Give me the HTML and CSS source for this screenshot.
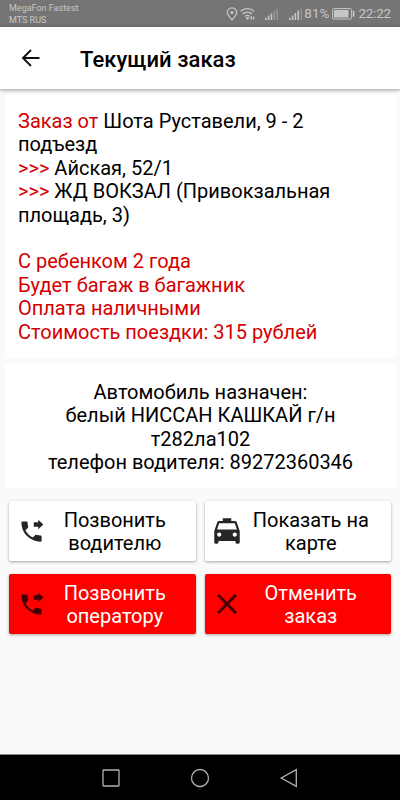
FILE: index.html
```html
<!DOCTYPE html>
<html lang="ru">
  <head>
    <meta charset="UTF-8" />
    <meta name="viewport" content="width=device-width, initial-scale=1.0" />
    <title>Текущий заказ</title>
    <link rel="stylesheet" href="styles.css">
  </head>
  <body>
    <div class="status-bar">
      <div class="carrier">
        <div>MegaFon Fastest</div>
        <div>MTS RUS</div>
      </div>
      <div class="status-icons">
        <svg class="pin" width="12" height="14" viewBox="0 0 12 14">
          <path d="M6 13C3.500 10 1.300 8 1.300 5.600a4.700 4.700 0 0 1 9.400 0C10.700 8 8.500 10 6 13z" fill="none" stroke="#c6c6c6" stroke-width="1.200"/>
          <circle cx="6" cy="5.600" r="1.500" fill="#c6c6c6"/>
        </svg>
        <svg class="wifi" width="15" height="13" viewBox="0 0 15 13">
          <path d="M.6 4.300a10 10 0 0 1 13.600 0M2.800 7a6.500 6.500 0 0 1 9.200 0M5 9.500a3.500 3.500 0 0 1 4.800 0" fill="none" stroke="#c6c6c6" stroke-width="1.400"/>
          <circle cx="7.400" cy="11.300" r="1.300" fill="#c6c6c6"/>
          <path d="M10.500 9.500h1.500v3h-1.500zM12.800 9.500h1.500v3h-1.500z" fill="#c6c6c6"/>
        </svg>
        <svg class="signal" width="14" height="12" viewBox="0 0 14 12">
          <path d="M0 9.500h1.600V12H0zM2.800 7.500h1.600V12H2.800zM5.600 5.500h1.600V12H5.600z" fill="#c6c6c6"/>
          <path d="M8.400 3h1.600v9H8.400zM11.400 1h1.400v11h-1.400z" fill="#999"/>
        </svg>
        <svg class="signal" width="14" height="12" viewBox="0 0 14 12">
          <path d="M0 9.500h1.600V12H0zM2.800 7.500h1.600V12H2.800zM5.600 5h1.600v7H5.600zM8.400 2.500h1.600V12H8.400z" fill="#c6c6c6"/>
          <path d="M11.600 .5h1.200V12h-1.200z" fill="#999"/>
        </svg>
        <span class="percent">81%</span>
        <svg class="battery" width="23" height="12" viewBox="0 0 23 12">
          <rect x=".6" y=".6" width="19" height="10.400" rx="1" fill="none" stroke="#c6c6c6" stroke-width="1"/>
          <path d="M2 2h14.500v7.600H2zM20.800 2.800h1.600v6h-1.600z" fill="#c6c6c6"/>
        </svg>
        <span class="clock">22:22</span>
      </div>
    </div>

    <header class="toolbar">
      <svg class="back" width="24" height="24" viewBox="0 0 24 24">
        <path d="M20.500 12H4.200M12 4L4 12l8 8" fill="none" stroke="#111" stroke-width="1.900"/>
      </svg>
      <h1>Текущий заказ</h1>
    </header>

    <main>
      <div class="card order">
        <p><span class="red">Заказ от</span> Шота Руставели, 9 - 2 подъезд</p>
        <p><span class="red">&gt;&gt;&gt;</span> Айская, 52/1</p>
        <p><span class="red">&gt;&gt;&gt;</span> ЖД ВОКЗАЛ (Привокзальная площадь, 3)</p>
        <div class="notes red">
          <p>С ребенком 2 года</p>
          <p>Будет багаж в багажник</p>
          <p>Оплата наличными</p>
          <p>Стоимость поездки: 315 рублей</p>
        </div>
      </div>

      <div class="card car">
        <p>Автомобиль назначен:</p>
        <p>белый НИССАН КАШКАЙ г/н<br>т282ла102</p>
        <p>телефон водителя: 89272360346</p>
      </div>

      <div class="buttons">
        <button class="btn">
          <svg class="phone" width="27" height="27" viewBox="0 0 24 24">
            <path d="M18 10l4.500-4.200L18 1.600v2.200h-4v4h4zm2 5.500c-1.250 0-2.450-.2-3.570-.57-.35-.11-.74-.03-1.020.24l-2.200 2.200c-2.830-1.440-5.150-3.750-6.590-6.590l2.200-2.210c.28-.26.36-.65.25-1C8.700 6.450 8.500 5.250 8.500 4c0-.55-.45-1-1-1H4c-.55 0-1 .45-1 1 0 9.390 7.610 17 17 17 .55 0 1-.45 1-1v-3.500c0-.55-.45-1-1-1z"/>
          </svg>
          <span>Позвонить<br>водителю</span>
        </button>
        <button class="btn">
          <svg class="taxi" width="34" height="34" viewBox="0 0 24 24">
            <path d="M18.920 6.010C18.720 5.420 18.160 5 17.500 5H15V3H9v2H6.500c-.66 0-1.210.42-1.420 1.010L3 12v8c0 .55.45 1 1 1h1c.55 0 1-.45 1-1v-1h12v1c0 .55.45 1 1 1h1c.55 0 1-.45 1-1v-8l-2.080-5.990zM6.500 16c-.83 0-1.500-.67-1.500-1.500S5.670 13 6.500 13s1.500.67 1.500 1.500S7.330 16 6.500 16zm11 0c-.83 0-1.500-.67-1.500-1.500s.67-1.500 1.500-1.500 1.500.67 1.500 1.500-.67 1.500-1.500 1.500zM5 11l1.500-4.500h11L19 11H5z"/>
          </svg>
          <span>Показать на<br>карте</span>
        </button>
        <button class="btn btn-red">
          <svg class="phone" width="27" height="27" viewBox="0 0 24 24">
            <path d="M18 10l4.500-4.200L18 1.600v2.200h-4v4h4zm2 5.500c-1.250 0-2.450-.2-3.570-.57-.35-.11-.74-.03-1.020.24l-2.200 2.200c-2.830-1.440-5.150-3.750-6.590-6.590l2.200-2.210c.28-.26.36-.65.25-1C8.700 6.450 8.500 5.250 8.500 4c0-.55-.45-1-1-1H4c-.55 0-1 .45-1 1 0 9.390 7.610 17 17 17 .55 0 1-.45 1-1v-3.500c0-.55-.45-1-1-1z"/>
          </svg>
          <span>Позвонить<br>оператору</span>
        </button>
        <button class="btn btn-red">
          <svg class="cross" width="34" height="34" viewBox="0 0 24 24">
            <path d="M19 6.410L17.590 5 12 10.590 6.410 5 5 6.410 10.590 12 5 17.590 6.410 19 12 13.410 17.590 19 19 17.590 13.410 12z"/>
          </svg>
          <span>Отменить<br>заказ</span>
        </button>
      </div>
    </main>

    <nav class="nav-bar">
      <svg width="20" height="20" viewBox="0 0 20 20"><rect x="2" y="2" width="16" height="16" rx=".5"/></svg>
      <svg width="20" height="20" viewBox="0 0 20 20"><circle cx="10" cy="10" r="8.500"/></svg>
      <svg width="20" height="20" viewBox="0 0 20 20"><path d="M17.300 1.600v16.800L2.200 10z"/></svg>
    </nav>
  </body>
</html>
```

FILE: styles.css
```css
* {
  box-sizing: border-box;
}
body {
  margin: 0;
  height: 800px;
  display: flex;
  flex-direction: column;
  font-family: Roboto, sans-serif;
  font-size: 20px;
  line-height: 23.4px;
  color: #000;
  background-color: #fafafa;
  overflow: hidden;
}
p,
h1 {
  margin: 0;
}

/* status bar */
.status-bar {
  height: 27px;
  flex: none;
  display: flex;
  justify-content: space-between;
  background-color: #757575;
  color: #c6c6c6;
}
.carrier {
  padding: 2px 0 0 9px;
  font-size: 9px;
  line-height: 12px;
}
.status-icons {
  display: flex;
  align-items: center;
  padding-right: 9px;
  font-size: 13.5px;
}
.pin {
  margin-right: 2px;
}
.signal {
  margin-left: 10px;
}
.percent {
  margin-left: 1px;
}
.battery {
  margin: 0 3px;
}
.clock {
  letter-spacing: -0.2px;
}

/* toolbar */
.toolbar {
  height: 62px;
  flex: none;
  display: flex;
  align-items: center;
  padding-left: 19px;
  background-color: #fff;
  box-shadow: 0 1px 4px rgba(0, 0, 0, 0.4);
  z-index: 1;
}
h1 {
  margin-left: 37px;
  padding-top: 3px;
  font-size: 22px;
  font-weight: 500;
  letter-spacing: 0.05px;
}

/* content */
main {
  flex: 1;
  padding: 5px 4px 0 5px;
}
.card {
  background-color: #fff;
}
.order {
  height: 264px;
  padding: 16px 13px 0;
}
.red {
  color: #d50000;
}
.notes {
  margin-top: 23.4px;
}
.car {
  height: 124px;
  margin-top: 6px;
  padding-top: 17px;
  text-align: center;
}
.buttons {
  display: grid;
  grid-template-columns: 1fr 1fr;
  gap: 13px 9px;
  padding: 13px 5px 0 4px;
}
.btn {
  height: 60px;
  display: flex;
  align-items: center;
  padding: 0 12px 0 9px;
  border: none;
  border-radius: 2px;
  background-color: #fff;
  box-shadow: 0 1px 3px rgba(0, 0, 0, 0.35);
  color: #000;
  font: inherit;
}
.btn svg {
  flex: none;
  fill: #262626;
}
.btn .phone {
  margin-right: 1px;
}
.btn .taxi,
.btn .cross {
  margin: 0 -1px 0 -4px;
}
.btn span {
  flex: 1;
  padding-top: 2px;
}
.btn-red {
  background-color: #f00;
  color: #fff;
}
.btn.btn-red svg {
  fill: #400;
}

/* navigation */
.nav-bar {
  height: 46px;
  flex: none;
  display: flex;
  justify-content: center;
  align-items: center;
  gap: 69px;
  background-color: #000;
  border-top: 1px solid #888;
}
.nav-bar svg {
  fill: none;
  stroke: #b0b0b0;
  stroke-width: 1.3;
}
```
